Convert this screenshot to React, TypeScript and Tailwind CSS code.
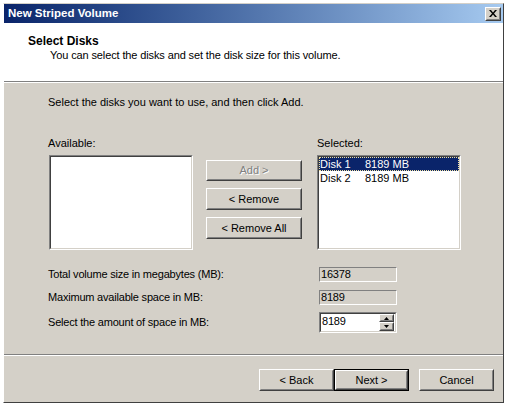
import React from 'react';

const font = { fontFamily: '"Liberation Sans", Arial, sans-serif' };

// Raised classic 3D button frame
const Raised: React.FC<{ className?: string; children?: React.ReactNode }> = ({ className = '', children }) => (
  <div className={`border border-t-white border-l-white border-r-[#404040] border-b-[#404040] bg-[#d4d0c8] ${className}`}>
    <div className="w-full h-full border border-t-[#d4d0c8] border-l-[#d4d0c8] border-r-[#808080] border-b-[#808080] flex items-center justify-center">
      {children}
    </div>
  </div>
);

// Sunken classic 3D frame (lists, edit boxes)
const Sunken: React.FC<{ className?: string; children?: React.ReactNode }> = ({ className = '', children }) => (
  <div className={`border border-t-[#808080] border-l-[#808080] border-r-white border-b-white ${className}`}>
    <div className="w-full h-full border border-t-[#404040] border-l-[#404040] border-r-[#d4d0c8] border-b-[#d4d0c8] bg-white relative">
      {children}
    </div>
  </div>
);

const WizardButton: React.FC<{ label: string; isDefault?: boolean; disabled?: boolean; className?: string }> = ({
  label,
  isDefault = false,
  disabled = false,
  className = '',
}) => {
  const text = (
    <span className={disabled ? 'text-[#808080] [text-shadow:1px_1px_0_#ffffff]' : 'text-black'}>{label}</span>
  );
  if (isDefault) {
    return (
      <div className={`border border-black ${className}`}>
        <Raised className="w-full h-full">{text}</Raised>
      </div>
    );
  }
  return <Raised className={className}>{text}</Raised>;
};

const ReadOnlyField: React.FC<{ value: string }> = ({ value }) => (
  <div className="w-[78px] h-[15px] border border-t-[#808080] border-l-[#808080] border-r-white border-b-white bg-[#d4d0c8] flex items-center pl-[1px] leading-none">
    {value}
  </div>
);

const SpinField: React.FC<{ value: string }> = ({ value }) => (
  <Sunken className="w-[78px] h-[21px]">
    <div className="flex h-full items-center justify-between">
      <span className="pl-[1px] pb-[2px]">{value}</span>
      <div className="flex flex-col mr-[1px]">
        <Raised className="w-[15px] h-[8px]">
          <svg width="5" height="3" viewBox="0 0 5 3">
            <path d="M2.5 0 L5 3 L0 3 Z" fill="#000" />
          </svg>
        </Raised>
        <Raised className="w-[15px] h-[9px]">
          <svg width="5" height="3" viewBox="0 0 5 3">
            <path d="M0 0 L5 0 L2.5 3 Z" fill="#000" />
          </svg>
        </Raised>
      </div>
    </div>
  </Sunken>
);

const disks = [
  { name: 'Disk 1', size: '8189 MB' },
  { name: 'Disk 2', size: '8189 MB' },
];

export default function App() {
  return (
    <div className="w-[510px] h-[409px] bg-white pt-[3px] pl-[3px] text-[11px] text-black" style={font}>
      <div className="w-[501px] h-[400px] border border-t-[#d4d0c8] border-l-white border-r-[#404040] border-b-[#404040] flex flex-col bg-[#d4d0c8]">
        {/* Title bar */}
        <div className="h-[19px] bg-gradient-to-r from-[#0a246a] to-[#a6caf0] flex items-center justify-between pl-[4px] pr-[2px]">
          <span className="text-white font-bold text-[11.5px]">New Striped Volume</span>
          <Raised className="w-[16px] h-[14px]">
            <svg width="8" height="7" viewBox="0 0 8 7">
              <path d="M0 0 L2 0 L4 2.5 L6 0 L8 0 L5 3.5 L8 7 L6 7 L4 4.5 L2 7 L0 7 L3 3.5 Z" fill="#000" />
            </svg>
          </Raised>
        </div>

        {/* Header */}
        <div className="h-[58px] bg-white pl-[24px] pt-[12px]">
          <div className="font-bold text-[12px] leading-[13px]">Select Disks</div>
          <div className="pl-[22px] mt-[1px] leading-[13px] tracking-[-0.12px]">
            You can select the disks and set the disk size for this volume.
          </div>
        </div>
        <div className="h-px bg-[#808080]" />
        <div className="h-px bg-white" />

        {/* Body */}
        <div className="h-[271px] pl-[44px] pt-[13px]">
          <div className="leading-[13px]">Select the disks you want to use, and then click Add.</div>

          <div className="flex mt-[28px] pl-[1px]">
            <div className="w-[144px]">
              <div className="leading-[13px] -ml-px">Available:</div>
              <Sunken className="mt-[5px] w-[144px] h-[95px]" />
            </div>

            <div className="ml-[13px] pt-[23px] flex flex-col gap-[7px]">
              <WizardButton label="Add >" disabled className="w-[96px] h-[21px]" />
              <WizardButton label="< Remove" className="w-[96px] h-[22px]" />
              <WizardButton label="< Remove All" className="w-[96px] h-[22px]" />
            </div>

            <div className="ml-[15px] w-[144px]">
              <div className="leading-[13px]">Selected:</div>
              <Sunken className="mt-[5px] w-[144px] h-[95px]">
                {disks.map((d, i) => (
                  <div
                    key={d.name}
                    className={`flex h-[14px] items-center leading-none ${
                      i === 0 ? 'bg-[#0a246a] text-white border border-dotted border-[#f0e0a0]' : 'border border-transparent'
                    }`}
                  >
                    <span className="w-[45px]">{d.name}</span>
                    <span>{d.size}</span>
                  </div>
                ))}
              </Sunken>
            </div>
          </div>

          <div className="mt-[17px] flex flex-col w-[349px] tracking-[-0.2px]">
            <div className="flex items-center justify-between h-[15px]">
              <span>Total volume size in megabytes (MB):</span>
              <ReadOnlyField value="16378" />
            </div>
            <div className="flex items-center justify-between h-[15px] mt-[8px]">
              <span>Maximum available space in MB:</span>
              <ReadOnlyField value="8189" />
            </div>
            <div className="flex items-center justify-between h-[21px] mt-[7px]">
              <span>Select the amount of space in MB:</span>
              <SpinField value="8189" />
            </div>
          </div>
        </div>
        <div className="h-px bg-[#808080]" />
        <div className="h-px bg-white" />

        {/* Footer */}
        <div className="flex-1 flex justify-end items-start pt-[13px] pr-[9px]">
          <WizardButton label="< Back" className="w-[75px] h-[22px]" />
          <WizardButton label="Next >" isDefault className="w-[75px] h-[22px]" />
          <WizardButton label="Cancel" className="w-[75px] h-[22px] ml-[10px]" />
        </div>
      </div>
    </div>
  );
}
